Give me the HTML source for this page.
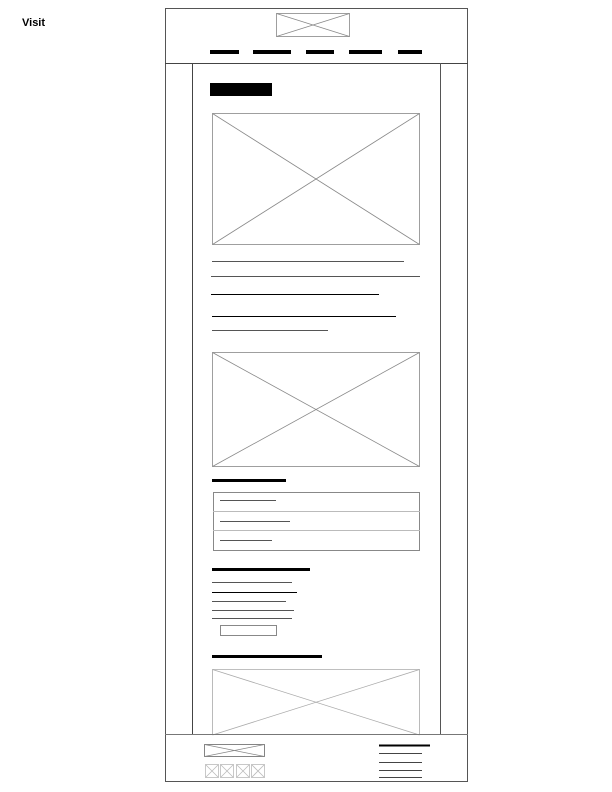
<!DOCTYPE html>
<html><head><meta charset="utf-8"><style>
html,body{margin:0;padding:0;background:#fff;width:612px;height:792px;overflow:hidden}
svg{display:block}
</style></head><body>
<svg width="612" height="792" viewBox="0 0 612 792" xmlns="http://www.w3.org/2000/svg">
<text x="22" y="26" font-family="Liberation Sans, sans-serif" font-size="11" font-weight="bold" fill="#000">Visit</text>
<g fill="none" stroke="#888" stroke-width="0.8">
<rect x="276.5" y="13.5" width="73" height="23"/><path d="M276.5 13.5L349.5 36.5M349.5 13.5L276.5 36.5"/>
<rect x="212.5" y="113.5" width="207" height="131"/><path d="M212.5 113.5L419.5 244.5M419.5 113.5L212.5 244.5"/>
<rect x="212.5" y="352.5" width="207" height="114"/><path d="M212.5 352.5L419.5 466.5M419.5 352.5L212.5 466.5"/>
<path d="M212.5 735V669.5H419.5V735" stroke="#aaa"/><path d="M212.5 669.5L419.5 735M419.5 669.5L212.5 735" stroke="#aaa"/>
<rect x="204.5" y="744.5" width="60" height="12" stroke="#666"/><path d="M204.5 744.5L264.5 756.5M264.5 744.5L204.5 756.5"/>
</g>
<g fill="none" shape-rendering="crispEdges">
<rect x="165.5" y="8.5" width="302" height="773" stroke="#555"/>
<line x1="165" y1="63.5" x2="468" y2="63.5" stroke="#444"/>
<line x1="192.5" y1="63" x2="192.5" y2="735" stroke="#444"/>
<line x1="440.5" y1="63" x2="440.5" y2="735" stroke="#555"/>
<line x1="165" y1="734.5" x2="468" y2="734.5" stroke="#777"/>
</g>
<g fill="none" stroke="#bbb" stroke-width="0.8">
<rect x="205.5" y="764.5" width="13" height="13"/><path d="M205.5 764.5l13 13m0-13l-13 13"/>
<rect x="220.5" y="764.5" width="13" height="13"/><path d="M220.5 764.5l13 13m0-13l-13 13"/>
<rect x="236.5" y="764.5" width="13" height="13"/><path d="M236.5 764.5l13 13m0-13l-13 13"/>
<rect x="251.5" y="764.5" width="13" height="13"/><path d="M251.5 764.5l13 13m0-13l-13 13"/>
</g>
<g fill="#000">
<rect x="210" y="50" width="29" height="4"/>
<rect x="253" y="50" width="38" height="4"/>
<rect x="306" y="50" width="28" height="4"/>
<rect x="349" y="50" width="33" height="4"/>
<rect x="398" y="50" width="24" height="4"/>
<rect x="210" y="83" width="62" height="13"/>
<rect x="212" y="479" width="74" height="3"/>
<rect x="212" y="568" width="98" height="3"/>
<rect x="212" y="655" width="110" height="3"/>
</g>
<g stroke-width="1" shape-rendering="crispEdges">
<line x1="212" y1="261.5" x2="404" y2="261.5" stroke="#555"/>
<line x1="211" y1="276.5" x2="420" y2="276.5" stroke="#555"/>
<line x1="211" y1="294.5" x2="379" y2="294.5" stroke="#000"/>
<line x1="212" y1="316.5" x2="396" y2="316.5" stroke="#000"/>
<line x1="212" y1="330.5" x2="328" y2="330.5" stroke="#555"/>
<rect x="213.5" y="492.5" width="206" height="58" fill="none" stroke="#888"/>
<line x1="213" y1="511.5" x2="420" y2="511.5" stroke="#bbb"/>
<line x1="213" y1="530.5" x2="420" y2="530.5" stroke="#bbb"/>
<line x1="220" y1="500.5" x2="276" y2="500.5" stroke="#555"/>
<line x1="220" y1="521.5" x2="290" y2="521.5" stroke="#555"/>
<line x1="220" y1="540.5" x2="272" y2="540.5" stroke="#555"/>
<line x1="212" y1="582.5" x2="292" y2="582.5" stroke="#555"/>
<line x1="212" y1="592.5" x2="297" y2="592.5" stroke="#000"/>
<line x1="212" y1="601.5" x2="286" y2="601.5" stroke="#555"/>
<line x1="212" y1="610.5" x2="294" y2="610.5" stroke="#555"/>
<line x1="212" y1="618.5" x2="292" y2="618.5" stroke="#555"/>
<rect x="220.5" y="625.5" width="56" height="10" fill="none" stroke="#888"/>
<line x1="379" y1="745.5" x2="430" y2="745.5" stroke="#000" stroke-width="2"/>
<line x1="379" y1="753.5" x2="422" y2="753.5" stroke="#444"/>
<line x1="379" y1="762.5" x2="422" y2="762.5" stroke="#444"/>
<line x1="379" y1="770.5" x2="422" y2="770.5" stroke="#444"/>
<line x1="379" y1="777.5" x2="422" y2="777.5" stroke="#444"/>
</g>
</svg>
</body></html>
